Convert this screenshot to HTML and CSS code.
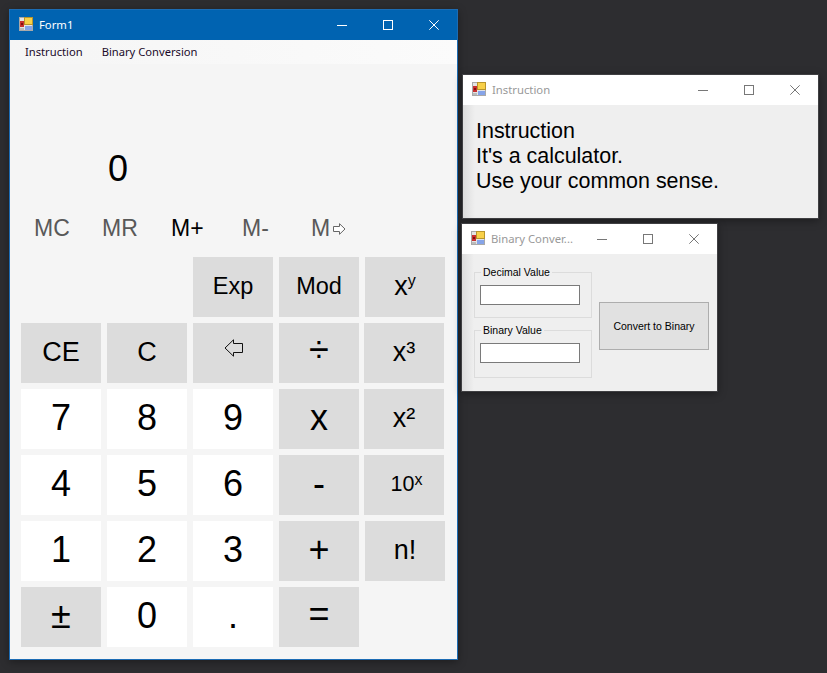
FILE: index.html
```html
<!DOCTYPE html>
<html lang="en">
<head>
  <meta charset="UTF-8">
  <title>Form1</title>
  <link rel="stylesheet" href="styles.css">
</head>
<body>
  <svg class="defs" width="0" height="0">
    <symbol id="app" viewBox="0 0 14 14">
      <rect x="0" y="0" width="14" height="14" fill="#a9a9a9"/>
      <rect x="1" y="1" width="12" height="12" fill="#e4e4e4"/>
      <rect x="1" y="4" width="4" height="6" fill="#c83030"/>
      <rect x="2" y="6" width="2" height="2" fill="#801010"/>
      <rect x="5" y="0" width="9" height="8" fill="#b8952c"/>
      <rect x="6" y="1" width="7" height="6" fill="#f8d048"/>
      <rect x="6" y="9" width="7" height="4" fill="#86a4e8"/>
      <rect x="1" y="11" width="4" height="2" fill="#bbb"/>
    </symbol>
    <symbol id="min" viewBox="0 0 10 10"><path d="M0 5.5H10" fill="none" stroke="currentColor"/></symbol>
    <symbol id="max" viewBox="0 0 10 10"><rect x=".5" y=".5" width="9" height="9" fill="none" stroke="currentColor"/></symbol>
    <symbol id="close" viewBox="0 0 10 10"><path d="M.3 .3L9.7 9.7M9.7 .3L.3 9.7" fill="none" stroke="currentColor"/></symbol>
    <symbol id="arrow-right" viewBox="0 0 13 12"><path d="M.5 3.5H6.5V.7L12 6L6.5 11.3V8.5H.5Z" fill="#fff" stroke="currentColor"/></symbol>
    <symbol id="arrow-left" viewBox="0 0 19 18"><path d="M18.5 4.5H9.5V.8L1 9L9.5 17.2V13.5H18.5Z" fill="none" stroke="currentColor"/></symbol>
  </svg>

  <div class="window calc">
    <div class="titlebar active">
      <svg class="app-icon"><use href="#app"/></svg>
      <span class="title">Form1</span>
      <span class="ctl"><svg><use href="#min"/></svg></span>
      <span class="ctl"><svg><use href="#max"/></svg></span>
      <span class="ctl"><svg><use href="#close"/></svg></span>
    </div>
    <div class="menu">
      <span class="menu-item">Instruction</span>
      <span class="menu-item">Binary Conversion</span>
    </div>
    <div class="display">0</div>
    <div class="memory">
      <span class="mem">MC</span>
      <span class="mem mr">MR</span>
      <span class="mem on">M+</span>
      <span class="mem mr">M-</span>
      <span class="mem">M<svg class="mem-arrow"><use href="#arrow-right"/></svg></span>
    </div>
    <div class="keys">
      <button class="key op small col3">Exp</button>
      <button class="key op small">Mod</button>
      <button class="key op power">x<sup>y</sup></button>

      <button class="key op mid">CE</button>
      <button class="key op mid">C</button>
      <button class="key op"><svg class="back"><use href="#arrow-left"/></svg></button>
      <button class="key op big lift">÷</button>
      <button class="key op mid nudge">x³</button>

      <button class="key num">7</button>
      <button class="key num">8</button>
      <button class="key num">9</button>
      <button class="key op big">x</button>
      <button class="key op mid nudge">x²</button>

      <button class="key num">4</button>
      <button class="key num">5</button>
      <button class="key num">6</button>
      <button class="key op big">-</button>
      <button class="key op ten nudge">10<sup>x</sup></button>

      <button class="key num">1</button>
      <button class="key num">2</button>
      <button class="key num">3</button>
      <button class="key op big">+</button>
      <button class="key op mid">n!</button>

      <button class="key op big">±</button>
      <button class="key num">0</button>
      <button class="key num">.</button>
      <button class="key op big lift">=</button>
    </div>
  </div>

  <div class="window instruction">
    <div class="titlebar">
      <svg class="app-icon"><use href="#app"/></svg>
      <span class="title">Instruction</span>
      <span class="ctl"><svg><use href="#min"/></svg></span>
      <span class="ctl"><svg><use href="#max"/></svg></span>
      <span class="ctl"><svg><use href="#close"/></svg></span>
    </div>
    <div class="body instruction-text">
      <p>Instruction</p>
      <p>It's a calculator.</p>
      <p>Use your common sense.</p>
    </div>
  </div>

  <div class="window binary">
    <div class="titlebar">
      <svg class="app-icon"><use href="#app"/></svg>
      <span class="title">Binary Conver...</span>
      <span class="ctl"><svg><use href="#min"/></svg></span>
      <span class="ctl"><svg><use href="#max"/></svg></span>
      <span class="ctl"><svg><use href="#close"/></svg></span>
    </div>
    <div class="body binary-body">
      <div class="groups">
        <fieldset class="group">
          <legend>Decimal Value</legend>
          <input class="field" type="text">
        </fieldset>
        <fieldset class="group tall">
          <legend>Binary Value</legend>
          <input class="field" type="text">
        </fieldset>
      </div>
      <button class="convert">Convert to Binary</button>
    </div>
  </div>
</body>
</html>
```

FILE: styles.css
```css
html, body {
  height: 100%;
  margin: 0;
  padding: 0;
  overflow: hidden;
}

body {
  background: #2d2d30;
  font-family: "Liberation Sans", sans-serif;
  color: #000;
}

.defs {
  position: absolute;
}

/* windows sit on a free desktop */
.window {
  position: absolute;
  box-sizing: border-box;
  display: flex;
  flex-direction: column;
  border: 1px solid #3f3f42;
  box-shadow: 0 2px 8px rgba(0, 0, 0, 0.35);
}

.calc {
  left: 9px;
  top: 9px;
  width: 449px;
  height: 651px;
  background: #f5f5f5;
  border-color: #1c6cb4;
}

.instruction {
  left: 462px;
  top: 74px;
  width: 357px;
  height: 145px;
}

.binary {
  left: 461px;
  top: 223px;
  width: 257px;
  height: 169px;
}

.titlebar {
  flex: none;
  height: 30px;
  display: flex;
  align-items: center;
  background: #fff;
  color: #999;
  padding-left: 9px;
  font-family: "Noto Sans", sans-serif;
  font-size: 11.3px;
}

.titlebar.active {
  background: #0063b1;
  color: #fff;
}

.app-icon {
  width: 14px;
  height: 14px;
  flex: none;
  margin-bottom: 2px;
}

.title {
  flex: 1;
  margin-left: 6px;
  padding-bottom: 1px;
  white-space: nowrap;
}

.ctl {
  flex: none;
  width: 46px;
  height: 30px;
  display: flex;
  align-items: center;
  justify-content: center;
  color: #777;
}

.active .ctl {
  color: #fff;
}

.ctl svg {
  width: 10px;
  height: 10px;
}

.menu {
  flex: none;
  box-sizing: border-box;
  height: 24px;
  display: flex;
  align-items: center;
  padding: 0 0 2px 15px;
  gap: 19px;
  background: linear-gradient(to right, #f5f5f5, #fbfbfb);
  font-family: "Noto Sans", sans-serif;
  font-size: 11.2px;
  color: #1a0a2a;
}

.display {
  height: 136px;
  box-sizing: border-box;
  padding: 84px 0 0 98px;
  font-size: 36px;
  line-height: 42px;
}

.memory {
  height: 57px;
  box-sizing: border-box;
  display: flex;
  align-items: flex-start;
  padding: 15px 0 0 24px;
  font-size: 23px;
  line-height: 27px;
  color: #595959;
}

.mem {
  width: 68px;
  display: flex;
  align-items: center;
}

.mem.mr {
  width: 69px;
}

.mem.on {
  color: #000;
  width: 71px;
}

.mem-arrow {
  width: 13px;
  height: 12px;
  margin-left: 3px;
  color: #666;
}

.keys {
  display: grid;
  grid-template-columns: repeat(5, 80px);
  grid-auto-rows: 60px;
  gap: 6px;
  padding-left: 11px;
}

.key {
  margin: 0;
  padding: 0 0 2px;
  border: 0;
  width: 80px;
  font-family: "Liberation Sans", sans-serif;
  color: #000;
  display: flex;
  align-items: center;
  justify-content: center;
}

.key.col3 {
  grid-column: 3;
}

.key.nudge {
  margin-left: -1px;
}

.key.lift {
  padding-bottom: 6px;
}

.num {
  background: #fff;
  font-size: 36px;
}

.op {
  background: #dcdcdc;
}

.small {
  font-size: 23.5px;
}

.mid {
  font-size: 27px;
}

.big {
  font-size: 36px;
}

.power {
  font-size: 27px;
}

.key.ten {
  font-size: 21.5px;
  padding-left: 5px;
}

.key sup {
  font-size: 16px;
  line-height: 1;
  align-self: flex-start;
  margin-top: 16px;
}

.ten sup {
  margin-top: 17px;
}

.back {
  width: 19px;
  height: 18px;
  color: #111;
  margin-top: -8px;
}

.body {
  flex: 1;
  background: linear-gradient(to right, #dcdcdc, #efefef 12px);
}

.instruction-text {
  padding: 14px 0 0 13px;
  font-size: 21.45px;
  line-height: 25px;
}

.instruction-text p {
  margin: 0;
}

.binary-body {
  display: flex;
  align-items: flex-start;
  padding: 12px 0 0 12px;
  font-size: 10.5px;
}

.groups {
  display: flex;
  flex-direction: column;
  gap: 6px;
}

.group {
  box-sizing: border-box;
  width: 118px;
  height: 52px;
  margin: 0;
  padding: 0 0 0 5px;
  border: 1px solid #dcdcdc;
}

.group.tall {
  height: 54px;
}

.group legend {
  margin-left: 1px;
  padding: 0 2px;
  font-size: 10.5px;
  line-height: 13px;
}

.field {
  display: block;
  box-sizing: border-box;
  width: 100px;
  height: 20px;
  margin: 6px 0 0 0;
  padding: 0;
  background: #fff;
  border: 1px solid #7a7a7a;
}

.convert {
  box-sizing: border-box;
  width: 110px;
  height: 48px;
  margin: 36px 0 0 7px;
  padding: 0;
  background: #e1e1e1;
  border: 1px solid #adadad;
  font-family: "Liberation Sans", sans-serif;
  font-size: 10.5px;
  color: #000;
}
```
